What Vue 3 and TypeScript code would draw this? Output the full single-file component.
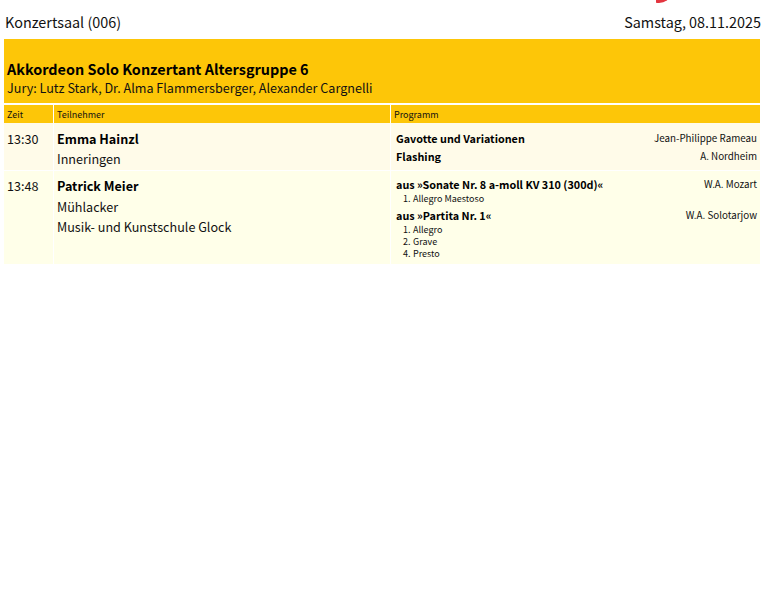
<script setup lang="ts">
interface Piece { title: string; composer: string; movements?: { n: number; name: string }[] }
interface Row { time: string; name: string; lines: string[]; pieces: Piece[]; tint: string }
const rows: Row[] = [
  { time: '13:30', name: 'Emma Hainzl', lines: ['Inneringen'], tint: 'odd', pieces: [
    { title: 'Gavotte und Variationen', composer: 'Jean-Philippe Rameau' },
    { title: 'Flashing', composer: 'A. Nordheim' },
  ] },
  { time: '13:48', name: 'Patrick Meier', lines: ['Mühlacker', 'Musik- und Kunstschule Glock'], tint: 'even', pieces: [
    { title: 'aus »Sonate Nr. 8 a-moll KV 310 (300d)«', composer: 'W.A. Mozart', movements: [{ n: 1, name: 'Allegro Maestoso' }] },
    { title: 'aus »Partita Nr. 1«', composer: 'W.A. Solotarjow', movements: [{ n: 1, name: 'Allegro' }, { n: 2, name: 'Grave' }, { n: 4, name: 'Presto' }] },
  ] },
]
</script>

<template>
  <div class="page">
    <div class="mark"></div>
    <header class="top">
      <span>Konzertsaal (006)</span>
      <span>Samstag, 08.11.2025</span>
    </header>
    <section class="banner">
      <h1>Akkordeon Solo Konzertant Altersgruppe 6</h1>
      <p>Jury: Lutz Stark, Dr. Alma Flammersberger, Alexander Cargnelli</p>
    </section>
    <div class="grid heads">
      <div>Zeit</div>
      <div>Teilnehmer</div>
      <div>Programm</div>
    </div>
    <div v-for="row in rows" :key="row.time" class="grid row" :class="row.tint">
      <div class="time">{{ row.time }}</div>
      <div class="who">
        <strong>{{ row.name }}</strong>
        <div v-for="line in row.lines" :key="line" class="line">{{ line }}</div>
      </div>
      <div class="prog">
        <div v-for="piece in row.pieces" :key="piece.title" class="piece">
          <div class="title">
            <strong>{{ piece.title }}</strong>
            <span>{{ piece.composer }}</span>
          </div>
          <div v-for="m in piece.movements" :key="m.n" class="move"><i>{{ m.n }}.</i>{{ m.name }}</div>
        </div>
      </div>
    </div>
  </div>
</template>

<style>
body { background: #fff; }
</style>

<style scoped>
.page {
  position: relative;
  height: 591px;
  box-sizing: border-box;
  padding: 11px 0 0 4px;
  overflow: hidden;
  font-family: "Noto Sans CJK SC", "Noto Sans", sans-serif;
  color: #111;
}
.mark {
  position: absolute;
  left: 648px;
  top: -14px;
  width: 22px;
  height: 17px;
  border-radius: 50%;
  background: #e3353f;
  clip-path: polygon(36% 0, 100% 0, 100% 100%, 36% 100%);
}
.top {
  display: flex;
  justify-content: space-between;
  height: 28px;
  padding-left: 1px;
  font-size: 14.4px;
  line-height: 22px;
}
.banner {
  width: 756px;
  height: 64px;
  box-sizing: border-box;
  padding: 21px 3px 0;
  background: #fdc608;
}
h1 {
  margin: 0;
  font-size: 14.4px;
  font-weight: 700;
  line-height: 18px;
  color: #000;
}
p {
  margin: 0;
  font-size: 12.6px;
  line-height: 19px;
}
.grid {
  display: grid;
  grid-template-columns: 49px 336px 369px;
  column-gap: 1px;
}
.heads {
  margin-top: 2px;
  font-size: 9px;
  line-height: 19px;
}
.heads > div {
  height: 18px;
  padding-left: 3px;
  background: #fdc608;
}
.row > div {
  box-sizing: border-box;
  padding-left: 3px;
}
.row.odd > div { background: #fffbe9; height: 47px; }
.row.even > div { background: #ffffe9; height: 93px; }
.row.even { margin-top: 1px; }
.time {
  padding-top: 6px;
  font-size: 12.6px;
  line-height: 20px;
}
.who {
  padding-top: 6px;
  font-size: 12.6px;
  line-height: 20px;
}
.who strong { display: block; color: #000; }
.row.even > .time,
.row.even > .who { padding-top: 5px; }
.row.even .who strong { margin-bottom: 1px; }
.row > .prog {
  padding: 6px 3px 0 5px;
}
.row.even > .prog { padding-top: 4px; }
.title {
  display: flex;
  justify-content: space-between;
  line-height: 18px;
}
.title strong { font-size: 10.8px; color: #000; }
.title span { font-size: 9.8px; }
.move {
  font-size: 9px;
  line-height: 12px;
  padding-left: 7px;
}
.move:first-of-type { margin-top: 0; }
.move i {
  font-style: normal;
  display: inline-block;
  width: 10px;
}
.move:last-child { margin-bottom: 1px; }
</style>
